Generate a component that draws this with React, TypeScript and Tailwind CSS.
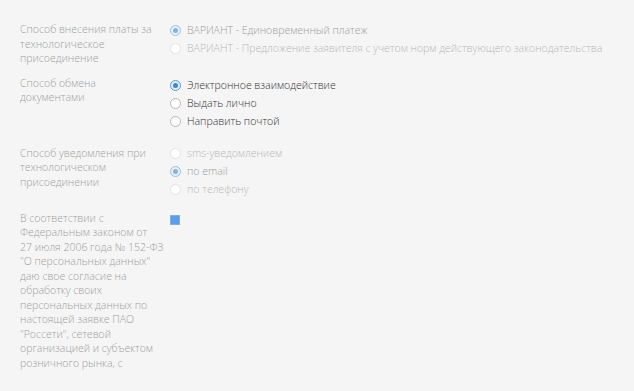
import React from "react";

type Opt = { label: string; checked?: boolean; disabled?: boolean };

function Radio({ checked, disabled }: { checked?: boolean; disabled?: boolean }) {
  if (checked) {
    return (
      <span
        className={`flex h-[11px] w-[11px] shrink-0 items-center justify-center rounded-full border border-[#5b9bd8] bg-[#e3eefa] ${
          disabled ? "opacity-60" : ""
        }`}
      >
        <span className="h-[5px] w-[5px] rounded-full bg-[#3d87d2]" />
      </span>
    );
  }
  return (
    <span
      className={`h-[11px] w-[11px] shrink-0 rounded-full border bg-white ${
        disabled ? "border-[#e2e2e2]" : "border-[#b8b8b8]"
      }`}
    />
  );
}

function Options({ items, className = "" }: { items: Opt[]; className?: string }) {
  return (
    <div className={`flex flex-col ${className}`}>
      {items.map((o) => (
        <div key={o.label} className="flex h-[18px] items-center gap-[6px]">
          <Radio checked={o.checked} disabled={o.disabled} />
          <span
            className={
              o.disabled
                ? o.checked
                  ? "text-[#9c9c9c]"
                  : "text-[#b8b8b8]"
                : "text-[#333333]"
            }
          >
            {o.label}
          </span>
        </div>
      ))}
    </div>
  );
}

export default function App() {
  return (
    <div
      className="min-h-[391px] w-full bg-[#f5f5f5] pl-[20px] pt-[22px] text-[10.5px] font-light leading-[14.5px]"
      style={{ fontFamily: "'Open Sans', 'Liberation Sans', sans-serif" }}
    >
      <div className="grid grid-cols-[150px_1fr]">
        <div className="text-[#9e9e9e]">
          Способ внесения платы за
          <br />
          технологическое
          <br />
          присоединение
        </div>
        <Options
          items={[
            { label: "ВАРИАНТ - Единовременный платеж", checked: true, disabled: true },
            {
              label:
                "ВАРИАНТ - Предложение заявителя с учетом норм действующего законодательства",
              disabled: true,
            },
          ]}
          className="-mt-[1px]"
        />
      </div>

      <div className="mt-[10px] grid grid-cols-[150px_1fr]">
        <div className="text-[#9e9e9e]">
          Способ обмена
          <br />
          документами
        </div>
        <Options
          items={[
            { label: "Электронное взаимодействие", checked: true },
            { label: "Выдать лично" },
            { label: "Направить почтой" },
          ]}
          className="mt-[1px]"
        />
      </div>

      <div className="mt-[15px] grid grid-cols-[150px_1fr]">
        <div className="text-[#9e9e9e]">
          Способ уведомления при
          <br />
          технологическом
          <br />
          присоединении
        </div>
        <Options
          items={[
            { label: "sms-уведомлением", disabled: true },
            { label: "по email", checked: true, disabled: true },
            { label: "по телефону", disabled: true },
          ]}
          className="-mt-[1px]"
        />
      </div>

      <div className="mt-[12px] grid grid-cols-[150px_1fr]">
        <div className="text-[#9e9e9e]">
          В соответствии с
          <br />
          Федеральным законом от
          <br />
          27 июля 2006 года № 152-ФЗ
          <br />
          "О персональных данных"
          <br />
          даю свое согласие на
          <br />
          обработку своих
          <br />
          персональных данных по
          <br />
          настоящей заявке ПАО
          <br />
          "Россети", сетевой
          <br />
          организацией и субъектом
          <br />
          розничного рынка, с
        </div>
        <div className="pt-[4px]">
          <span className="block h-[10px] w-[10px] border border-[#7fb0e4] bg-[#5b9ee6]" />
        </div>
      </div>
    </div>
  );
}
